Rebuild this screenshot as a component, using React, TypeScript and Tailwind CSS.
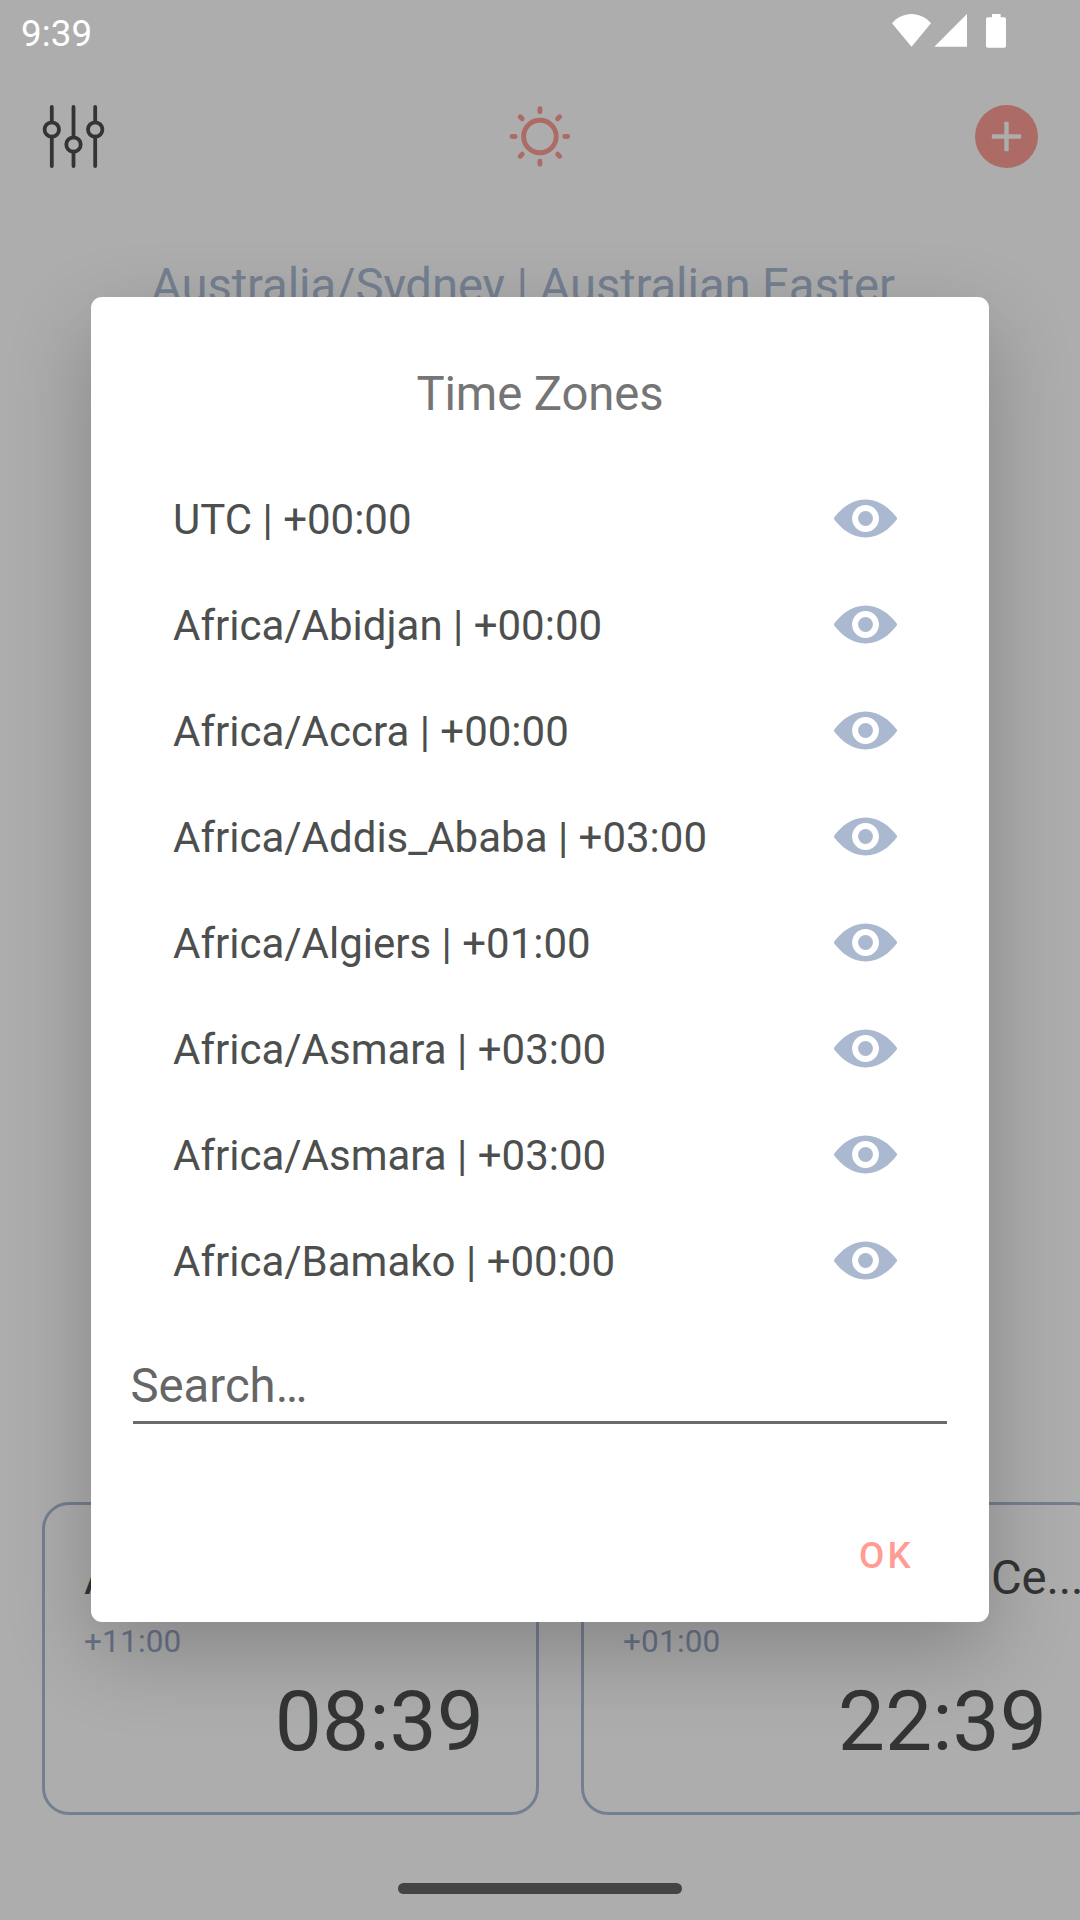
const zones = [
  "UTC | +00:00",
  "Africa/Abidjan | +00:00",
  "Africa/Accra | +00:00",
  "Africa/Addis_Ababa | +03:00",
  "Africa/Algiers | +01:00",
  "Africa/Asmara | +03:00",
  "Africa/Asmara | +03:00",
  "Africa/Bamako | +00:00",
];

function StatusBar() {
  return (
    <div className="flex h-[63px] shrink-0 items-start justify-between pl-[21px] pr-[74px] text-white">
      <span className="mt-3 text-[36.75px] leading-[44px] tracking-[0.1px]">9:39</span>
      <svg className="mt-[14px] h-[34px] w-[114px]" viewBox="892 14 114 34" fill="currentColor">
        <path d="M892 23.2C897 17.5 904 14 911.5 14S926 17.5 931 23.2L911.5 46.7Z" />
        <path d="M967 14V46.7H934.3Z" />
        <path d="M992 14H1000.6V17.3H1004.3Q1006 17.3 1006 19V46Q1006 47.8 1004.3 47.8H987.8Q986 47.8 986 46V19Q986 17.3 987.8 17.3H992Z" />
      </svg>
    </div>
  );
}

function SlidersIcon() {
  return (
    <svg className="h-[63px] w-[63px]" viewBox="0 0 63 63" fill="none" stroke="#333534" strokeWidth="3.8" strokeLinecap="round">
      <path d="M9.8 1.9V17.3M9.8 31.7V61.1M31.5 1.9V32.3M31.5 46.7V61.1M53.2 1.9V17.3M53.2 31.7V61.1" />
      <circle cx="9.8" cy="24.5" r="7.2" />
      <circle cx="31.5" cy="39.5" r="7.2" />
      <circle cx="53.2" cy="24.5" r="7.2" />
    </svg>
  );
}

function SunIcon() {
  return (
    <svg className="h-[63px] w-[63px]" viewBox="-30.9 -31.5 63 63" fill="none" stroke="#ad6b66" strokeWidth="4.9" strokeLinecap="round">
      <circle r="16.3" />
      <path d="M0-27.8V-24.8M0 27.8V24.8M-27.8 0H-24.8M27.8 0H24.8M-19.7-19.7L-17.7-17.7M19.7-19.7L17.7-17.7M-19.7 19.7L-17.7 17.7M19.7 19.7L17.7 17.7" />
    </svg>
  );
}

function PlusIcon() {
  return (
    <svg className="h-[63px] w-[63px]" viewBox="0 0 63 63">
      <circle cx="31.5" cy="31.5" r="31.5" fill="#ad6b66" />
      <rect x="16.8" y="29.3" width="29.4" height="4.4" rx="0.8" fill="#adadad" />
      <rect x="29.3" y="16.8" width="4.4" height="29.4" rx="0.8" fill="#adadad" />
    </svg>
  );
}

function EyeIcon() {
  return (
    <svg className="mb-[2px] h-[63px] w-[63px]" viewBox="-31.5 -31.5 63 63">
      <path
        d="M-31.2-.9C-24-10.5-13.5-18.9 0-18.9S24-10.5 31.2-.9Q31.8 0 31.2.9C24 10.5 13.5 18.9 0 18.9S-24 10.5-31.2.9Q-31.8 0-31.2-.9Z"
        fill="#abb9d0"
      />
      <circle r="13.4" fill="#fff" />
      <circle r="7.4" fill="#abb9d0" />
    </svg>
  );
}

function ClockCard({
  width,
  zone,
  label,
  offset,
  time,
}: {
  width: string;
  zone: string;
  label?: string;
  offset: string;
  time: string;
}) {
  return (
    <div className={`${width} h-[313px] shrink-0 rounded-[27px] border-[3px] border-[#747f90] pl-[39px] pr-[15px] pt-[45px]`}>
      <div className="flex whitespace-nowrap text-[47.25px] leading-[56px] text-[#333534]">
        <span className="w-[368px] shrink-0">{zone}</span>
        {label && <span className="tracking-[-0.2px]">{label}</span>}
      </div>
      <div className="mt-[17px] text-[31.5px] leading-[38px] tracking-[0.2px] text-[#69748a]">{offset}</div>
      <div className="mt-[12px] pr-[37px] text-right text-[84px] leading-[98px] text-[#333534]">{time}</div>
    </div>
  );
}

export default function App() {
  return (
    <div
      className="relative flex h-[1920px] w-[1080px] flex-col overflow-hidden bg-[#adadad]"
      style={{ fontFamily: "Roboto, sans-serif" }}
    >
      <StatusBar />
      <header className="flex h-[147px] shrink-0 items-center justify-between px-[42px]">
        <SlidersIcon />
        <SunIcon />
        <PlusIcon />
      </header>
      <div className="ml-[151px] mt-[48px] h-[56px] whitespace-nowrap text-[47.25px] leading-[56px] tracking-[-0.1px] text-[#747f90]">
        Australia/Sydney | Australian Easter
      </div>
      <div className="mt-auto flex gap-[42px] pl-[42px]">
        <ClockCard width="w-[497px]" zone="Australia/Sydney" offset="+11:00" time="08:39" />
        <ClockCard width="w-[521px]" zone="Europe/Madrid |" label="Ce..." offset="+01:00" time="22:39" />
      </div>
      <div className="mb-[26px] mt-[68px] h-[11px] w-[284px] shrink-0 self-center rounded-full bg-[#444444]" />

      <section
        role="dialog"
        className="absolute left-[91px] top-[297px] flex h-[1325px] w-[898px] flex-col rounded-[11px] bg-white shadow-[0_30px_84px_rgba(0,0,0,0.23)]"
      >
        <h1 className="mb-[35px] mt-[60px] text-center text-[47.25px] leading-[74px] tracking-[-0.1px] text-[#757575]">Time Zones</h1>
        <ul>
          {zones.map((zone, i) => (
            <li key={i} className="flex h-[106px] items-center justify-between pl-[82px] pr-[92px]">
              <span className="mt-[2px] text-[42px] leading-[50px] text-[#4d4f4e]">{zone}</span>
              <EyeIcon />
            </li>
          ))}
        </ul>
        <div className="mx-[42px] mt-[36px] border-b-[3px] border-[#6b6b6b] pt-[2px] text-[47.25px] leading-[69px] text-[#666666]">
          <span className="-ml-[2.5px]">Search…</span>
        </div>
        <button className="mr-[75px] mt-[105px] self-end text-[36.75px] font-medium leading-[54px] tracking-[3.28px] text-[#ff9d94]">
          OK
        </button>
      </section>
    </div>
  );
}
